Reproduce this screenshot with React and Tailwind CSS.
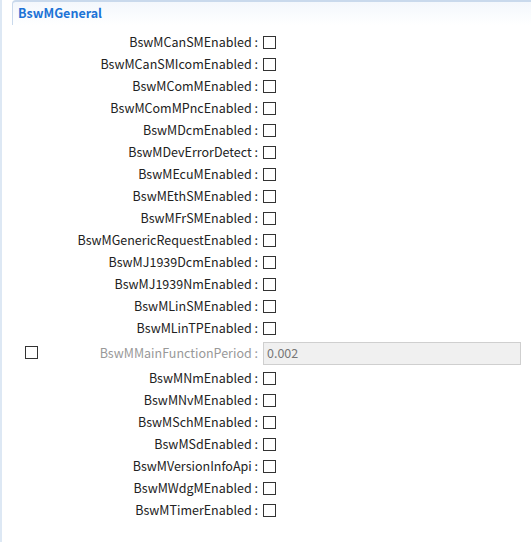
import React from "react";

const before = [
  "BswMCanSMEnabled",
  "BswMCanSMIcomEnabled",
  "BswMComMEnabled",
  "BswMComMPncEnabled",
  "BswMDcmEnabled",
  "BswMDevErrorDetect",
  "BswMEcuMEnabled",
  "BswMEthSMEnabled",
  "BswMFrSMEnabled",
  "BswMGenericRequestEnabled",
  "BswMJ1939DcmEnabled",
  "BswMJ1939NmEnabled",
  "BswMLinSMEnabled",
  "BswMLinTPEnabled",
];

const after = [
  "BswMNmEnabled",
  "BswMNvMEnabled",
  "BswMSchMEnabled",
  "BswMSdEnabled",
  "BswMVersionInfoApi",
  "BswMWdgMEnabled",
  "BswMTimerEnabled",
];

const Box = () => (
  <span className="inline-block w-[13px] h-[13px] border border-[#333] bg-white shrink-0" />
);

const Row = ({ label }) => (
  <div className="flex items-center h-[22px]">
    <div className="w-[261px] text-right pr-[5px] text-[#222] whitespace-nowrap">
      {label} :
    </div>
    <Box />
  </div>
);

export default function App() {
  return (
    <div
      className="w-[531px] h-[542px] bg-white border-l-2 border-[#dde8f4] overflow-hidden text-[12.5px] leading-none"
      style={{ fontFamily: '"Noto Sans CJK SC", "Noto Sans", sans-serif' }}
    >
      <div className="ml-[10px] h-[25px] rounded-tl-[4px] border-t-2 border-l border-[#c9d9ec] bg-gradient-to-b from-[#f3f7fc] to-white flex items-center pl-[5px]">
        <span className="font-bold text-[#1d73d6]">BswMGeneral</span>
      </div>
      <div className="pt-[6px]">
        {before.map((l) => (
          <Row key={l} label={l} />
        ))}
        <div className="flex items-center h-[26px] mt-[1px] mb-[1px]">
          <div className="w-[261px] flex items-center pr-[5px]">
            <span className="ml-[23px]">
              <Box />
            </span>
            <span className="flex-1 text-right text-[#999] whitespace-nowrap">
              BswMMainFunctionPeriod :
            </span>
          </div>
          <div className="w-[258px] h-[23px] bg-[#f0f0f0] border border-[#cfcfcf] flex items-center px-[3px] text-[#777]">
            0.002
          </div>
        </div>
        {after.map((l) => (
          <Row key={l} label={l} />
        ))}
      </div>
    </div>
  );
}
